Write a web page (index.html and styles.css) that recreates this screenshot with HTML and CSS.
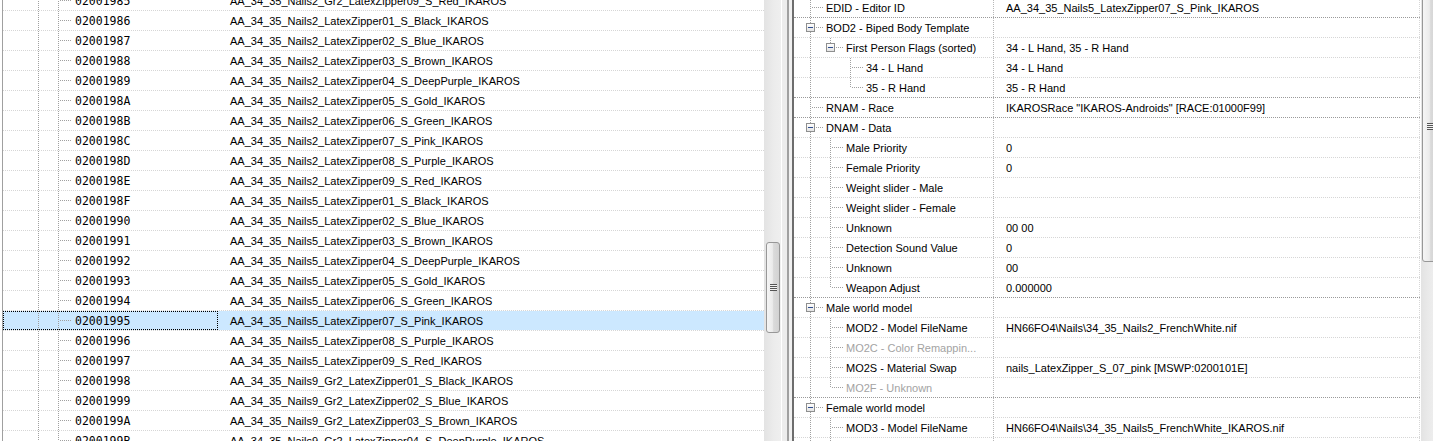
FILE: index.html
```html
<!DOCTYPE html>
<html lang="en">
<head>
  <meta charset="UTF-8" />
  <title>FO4Edit - ARMA records</title>
  <link rel="stylesheet" href="styles.css">
</head>
<body>
  <div class="app">

    <!-- record list -->
    <div class="left">
      <div class="list">
        <div class="row"><div class="c-form"><span class="pipe"></span><span class="tee"></span><span class="fid">02001985</span></div><div class="c-edid">AA_34_35_Nails2_Gr2_LatexZipper09_S_Red_IKAROS</div></div>
        <div class="row"><div class="c-form"><span class="pipe"></span><span class="tee"></span><span class="fid">02001986</span></div><div class="c-edid">AA_34_35_Nails2_LatexZipper01_S_Black_IKAROS</div></div>
        <div class="row"><div class="c-form"><span class="pipe"></span><span class="tee"></span><span class="fid">02001987</span></div><div class="c-edid">AA_34_35_Nails2_LatexZipper02_S_Blue_IKAROS</div></div>
        <div class="row"><div class="c-form"><span class="pipe"></span><span class="tee"></span><span class="fid">02001988</span></div><div class="c-edid">AA_34_35_Nails2_LatexZipper03_S_Brown_IKAROS</div></div>
        <div class="row"><div class="c-form"><span class="pipe"></span><span class="tee"></span><span class="fid">02001989</span></div><div class="c-edid">AA_34_35_Nails2_LatexZipper04_S_DeepPurple_IKAROS</div></div>
        <div class="row"><div class="c-form"><span class="pipe"></span><span class="tee"></span><span class="fid">0200198A</span></div><div class="c-edid">AA_34_35_Nails2_LatexZipper05_S_Gold_IKAROS</div></div>
        <div class="row"><div class="c-form"><span class="pipe"></span><span class="tee"></span><span class="fid">0200198B</span></div><div class="c-edid">AA_34_35_Nails2_LatexZipper06_S_Green_IKAROS</div></div>
        <div class="row"><div class="c-form"><span class="pipe"></span><span class="tee"></span><span class="fid">0200198C</span></div><div class="c-edid">AA_34_35_Nails2_LatexZipper07_S_Pink_IKAROS</div></div>
        <div class="row"><div class="c-form"><span class="pipe"></span><span class="tee"></span><span class="fid">0200198D</span></div><div class="c-edid">AA_34_35_Nails2_LatexZipper08_S_Purple_IKAROS</div></div>
        <div class="row"><div class="c-form"><span class="pipe"></span><span class="tee"></span><span class="fid">0200198E</span></div><div class="c-edid">AA_34_35_Nails2_LatexZipper09_S_Red_IKAROS</div></div>
        <div class="row"><div class="c-form"><span class="pipe"></span><span class="tee"></span><span class="fid">0200198F</span></div><div class="c-edid">AA_34_35_Nails5_LatexZipper01_S_Black_IKAROS</div></div>
        <div class="row"><div class="c-form"><span class="pipe"></span><span class="tee"></span><span class="fid">02001990</span></div><div class="c-edid">AA_34_35_Nails5_LatexZipper02_S_Blue_IKAROS</div></div>
        <div class="row"><div class="c-form"><span class="pipe"></span><span class="tee"></span><span class="fid">02001991</span></div><div class="c-edid">AA_34_35_Nails5_LatexZipper03_S_Brown_IKAROS</div></div>
        <div class="row"><div class="c-form"><span class="pipe"></span><span class="tee"></span><span class="fid">02001992</span></div><div class="c-edid">AA_34_35_Nails5_LatexZipper04_S_DeepPurple_IKAROS</div></div>
        <div class="row"><div class="c-form"><span class="pipe"></span><span class="tee"></span><span class="fid">02001993</span></div><div class="c-edid">AA_34_35_Nails5_LatexZipper05_S_Gold_IKAROS</div></div>
        <div class="row"><div class="c-form"><span class="pipe"></span><span class="tee"></span><span class="fid">02001994</span></div><div class="c-edid">AA_34_35_Nails5_LatexZipper06_S_Green_IKAROS</div></div>
        <div class="row sel"><div class="c-form focus"><span class="pipe"></span><span class="tee"></span><span class="fid">02001995</span></div><div class="c-edid">AA_34_35_Nails5_LatexZipper07_S_Pink_IKAROS</div></div>
        <div class="row"><div class="c-form"><span class="pipe"></span><span class="tee"></span><span class="fid">02001996</span></div><div class="c-edid">AA_34_35_Nails5_LatexZipper08_S_Purple_IKAROS</div></div>
        <div class="row"><div class="c-form"><span class="pipe"></span><span class="tee"></span><span class="fid">02001997</span></div><div class="c-edid">AA_34_35_Nails5_LatexZipper09_S_Red_IKAROS</div></div>
        <div class="row"><div class="c-form"><span class="pipe"></span><span class="tee"></span><span class="fid">02001998</span></div><div class="c-edid">AA_34_35_Nails9_Gr2_LatexZipper01_S_Black_IKAROS</div></div>
        <div class="row"><div class="c-form"><span class="pipe"></span><span class="tee"></span><span class="fid">02001999</span></div><div class="c-edid">AA_34_35_Nails9_Gr2_LatexZipper02_S_Blue_IKAROS</div></div>
        <div class="row"><div class="c-form"><span class="pipe"></span><span class="tee"></span><span class="fid">0200199A</span></div><div class="c-edid">AA_34_35_Nails9_Gr2_LatexZipper03_S_Brown_IKAROS</div></div>
        <div class="row"><div class="c-form"><span class="pipe"></span><span class="tee"></span><span class="fid">0200199B</span></div><div class="c-edid">AA_34_35_Nails9_Gr2_LatexZipper04_S_DeepPurple_IKAROS</div></div>
      </div>
      <div class="vscroll">
        <div class="thumb thumb-l"><i class="grip"></i></div>
      </div>
    </div>

    <div class="splitter"></div>

    <!-- record view -->
    <div class="right">
      <div class="record">
        <div class="rrow end"><div class="name"><span class="tee"></span><span class="nm">EDID - Editor ID</span></div><div class="val">AA_34_35_Nails5_LatexZipper07_S_Pink_IKAROS</div></div>
        <div class="rrow"><div class="name"><span class="node"><i class="box"></i></span><span class="nm">BOD2 - Biped Body Template</span></div><div class="val"></div></div>
        <div class="rrow"><div class="name"><span class="pipe"></span><span class="node last"><i class="box"></i></span><span class="nm">First Person Flags (sorted)</span></div><div class="val">34 - L Hand, 35 - R Hand</div></div>
        <div class="rrow"><div class="name"><span class="pipe"></span><span class="gap"></span><span class="tee"></span><span class="nm">34 - L Hand</span></div><div class="val">34 - L Hand</div></div>
        <div class="rrow end"><div class="name"><span class="pipe"></span><span class="gap"></span><span class="elbow"></span><span class="nm">35 - R Hand</span></div><div class="val">35 - R Hand</div></div>
        <div class="rrow end"><div class="name"><span class="tee"></span><span class="nm">RNAM - Race</span></div><div class="val">IKAROSRace "IKAROS-Androids" [RACE:01000F99]</div></div>
        <div class="rrow"><div class="name"><span class="node"><i class="box"></i></span><span class="nm">DNAM - Data</span></div><div class="val"></div></div>
        <div class="rrow"><div class="name"><span class="pipe"></span><span class="tee"></span><span class="nm">Male Priority</span></div><div class="val">0</div></div>
        <div class="rrow"><div class="name"><span class="pipe"></span><span class="tee"></span><span class="nm">Female Priority</span></div><div class="val">0</div></div>
        <div class="rrow"><div class="name"><span class="pipe"></span><span class="tee"></span><span class="nm">Weight slider - Male</span></div><div class="val"></div></div>
        <div class="rrow"><div class="name"><span class="pipe"></span><span class="tee"></span><span class="nm">Weight slider - Female</span></div><div class="val"></div></div>
        <div class="rrow"><div class="name"><span class="pipe"></span><span class="tee"></span><span class="nm">Unknown</span></div><div class="val">00 00</div></div>
        <div class="rrow"><div class="name"><span class="pipe"></span><span class="tee"></span><span class="nm">Detection Sound Value</span></div><div class="val">0</div></div>
        <div class="rrow"><div class="name"><span class="pipe"></span><span class="tee"></span><span class="nm">Unknown</span></div><div class="val">00</div></div>
        <div class="rrow end"><div class="name"><span class="pipe"></span><span class="elbow"></span><span class="nm">Weapon Adjust</span></div><div class="val">0.000000</div></div>
        <div class="rrow"><div class="name"><span class="node"><i class="box"></i></span><span class="nm">Male world model</span></div><div class="val"></div></div>
        <div class="rrow"><div class="name"><span class="pipe"></span><span class="tee"></span><span class="nm">MOD2 - Model FileName</span></div><div class="val">HN66FO4\Nails\34_35_Nails2_FrenchWhite.nif</div></div>
        <div class="rrow"><div class="name"><span class="pipe"></span><span class="tee"></span><span class="nm dim">MO2C - Color Remappin...</span></div><div class="val"></div></div>
        <div class="rrow"><div class="name"><span class="pipe"></span><span class="tee"></span><span class="nm">MO2S - Material Swap</span></div><div class="val">nails_LatexZipper_S_07_pink [MSWP:0200101E]</div></div>
        <div class="rrow end"><div class="name"><span class="pipe"></span><span class="elbow"></span><span class="nm dim">MO2F - Unknown</span></div><div class="val"></div></div>
        <div class="rrow"><div class="name"><span class="node"><i class="box"></i></span><span class="nm">Female world model</span></div><div class="val"></div></div>
        <div class="rrow"><div class="name"><span class="pipe"></span><span class="tee"></span><span class="nm">MOD3 - Model FileName</span></div><div class="val">HN66FO4\Nails\34_35_Nails5_FrenchWhite_IKAROS.nif</div></div>
        <div class="rrow"><div class="name"><span class="pipe"></span><span class="tee"></span><span class="nm dim">MO3C - Color Remappin...</span></div><div class="val"></div></div>
      </div>
      <div class="vscroll">
        <div class="thumb thumb-r"><i class="grip"></i></div>
      </div>
    </div>

  </div>
</body>
</html>
```

FILE: styles.css
```css
* {
  box-sizing: border-box;
}
body {
  margin: 0;
  background: #fff;
  font-family: "Liberation Sans", Arial, sans-serif;
  font-size: 11px;
  color: #000;
  overflow: hidden;
}
.app {
  display: flex;
  width: 1438px;
  height: 441px;
  overflow: hidden;
}

/* tree lines */
.pipe, .tee, .elbow, .node, .gap {
  flex-shrink: 0;
  height: 100%;
}
.pipe, .gap {
  width: 20px;
}
.pipe {
  background: repeating-linear-gradient(#a0a0a0 0 1px, transparent 1px 2px) 10px 0 / 1px 100% no-repeat;
}
.tee {
  width: 23px;
  background:
    repeating-linear-gradient(#a0a0a0 0 1px, transparent 1px 2px) 10px 0 / 1px 100% no-repeat,
    repeating-linear-gradient(to right, #a0a0a0 0 1px, transparent 1px 2px) 12px 9px / 11px 1px no-repeat;
}
.elbow {
  width: 23px;
  background:
    repeating-linear-gradient(#a0a0a0 0 1px, transparent 1px 2px) 10px 0 / 1px 10px no-repeat,
    repeating-linear-gradient(to right, #a0a0a0 0 1px, transparent 1px 2px) 12px 9px / 11px 1px no-repeat;
}
.node {
  width: 23px;
  display: flex;
  background:
    repeating-linear-gradient(#a0a0a0 0 1px, transparent 1px 2px) 10px 0 / 1px 5px no-repeat,
    repeating-linear-gradient(#a0a0a0 0 1px, transparent 1px 2px) 10px 14px / 1px 6px no-repeat,
    repeating-linear-gradient(to right, #a0a0a0 0 1px, transparent 1px 2px) 16px 9px / 7px 1px no-repeat;
}
.node.last {
  background:
    repeating-linear-gradient(#a0a0a0 0 1px, transparent 1px 2px) 10px 0 / 1px 5px no-repeat,
    repeating-linear-gradient(to right, #a0a0a0 0 1px, transparent 1px 2px) 16px 9px / 7px 1px no-repeat;
}
.box {
  width: 9px;
  height: 9px;
  margin: 5px 0 0 6px;
  border: 1px solid #8e8f8f;
  background: linear-gradient(#fff, #e4e4e4);
  display: flex;
  align-items: center;
  justify-content: center;
}
.box::before {
  content: "";
  width: 5px;
  height: 1px;
  background: #2e4d8e;
}

/* left list */
.left {
  display: flex;
  margin-left: 2px;
  border-left: 1px solid #a0a0a0;
}
.list {
  width: 761px;
  margin-top: -9px;
}
.row {
  display: flex;
  height: 20px;
  border-bottom: 1px dotted #d6d6d6;
  background-clip: padding-box;
}
.row.sel {
  background: #cce8ff;
  background-clip: padding-box;
}
.c-form {
  width: 215px;
  display: flex;
  padding-left: 25px;
}
.c-form.focus {
  outline: 1px dotted #000;
  outline-offset: -1px;
}
.fid {
  margin-left: 4px;
  font-family: "DejaVu Sans Mono", monospace;
  font-size: 11.5px;
  line-height: 21px;
}
.c-edid {
  flex: 1;
  padding-left: 12px;
  line-height: 21px;
  white-space: nowrap;
}

/* scrollbars */
.vscroll {
  width: 17px;
  flex-shrink: 0;
  display: flex;
  flex-direction: column;
  background: linear-gradient(to right, #e3e3e3, #ececec 60%, #efefef);
}
.thumb {
  flex-shrink: 0;
  border: 1px solid #979797;
  border-radius: 3px;
  background: linear-gradient(to right, #f5f5f5, #ebebeb 45%, #dadada 55%, #d2d2d2);
  display: flex;
  align-items: center;
  justify-content: center;
}
.thumb-l {
  margin: 242px 1px 0 2px;
  height: 91px;
}
.thumb-r {
  margin: -10px 0 0 1px;
  height: 272px;
}
.grip {
  width: 7px;
  height: 7px;
  background: repeating-linear-gradient(#555 0 1px, #f2f2f2 1px 2px);
}

.splitter {
  width: 13px;
  flex-shrink: 0;
  background: linear-gradient(to right, #fff 0 1px, #ececec 1px 6px, #a0a0a0 6px 8px, #f0f0f0 8px 11px, #6d6d6d 11px 13px);
}

/* record view */
.right {
  display: flex;
}
.record {
  width: 627px;
  padding-right: 1px;
  margin-top: -2px;
}
.rrow {
  display: flex;
  height: 20px;
  border-bottom: 1px dotted #d6d6d6;
}
.rrow.end {
  border-bottom-color: #9a9a9a;
}
.name {
  width: 200px;
  display: flex;
  padding-left: 6px;
  border-right: 1px dotted #b8b8b8;
}
.nm {
  margin-left: 3px;
  line-height: 21px;
  white-space: nowrap;
}
.dim {
  color: #a3a3a3;
}
.val {
  flex: 1;
  padding-left: 12px;
  line-height: 21px;
  white-space: nowrap;
  border-right: 1px dotted #d6d6d6;
}
```
